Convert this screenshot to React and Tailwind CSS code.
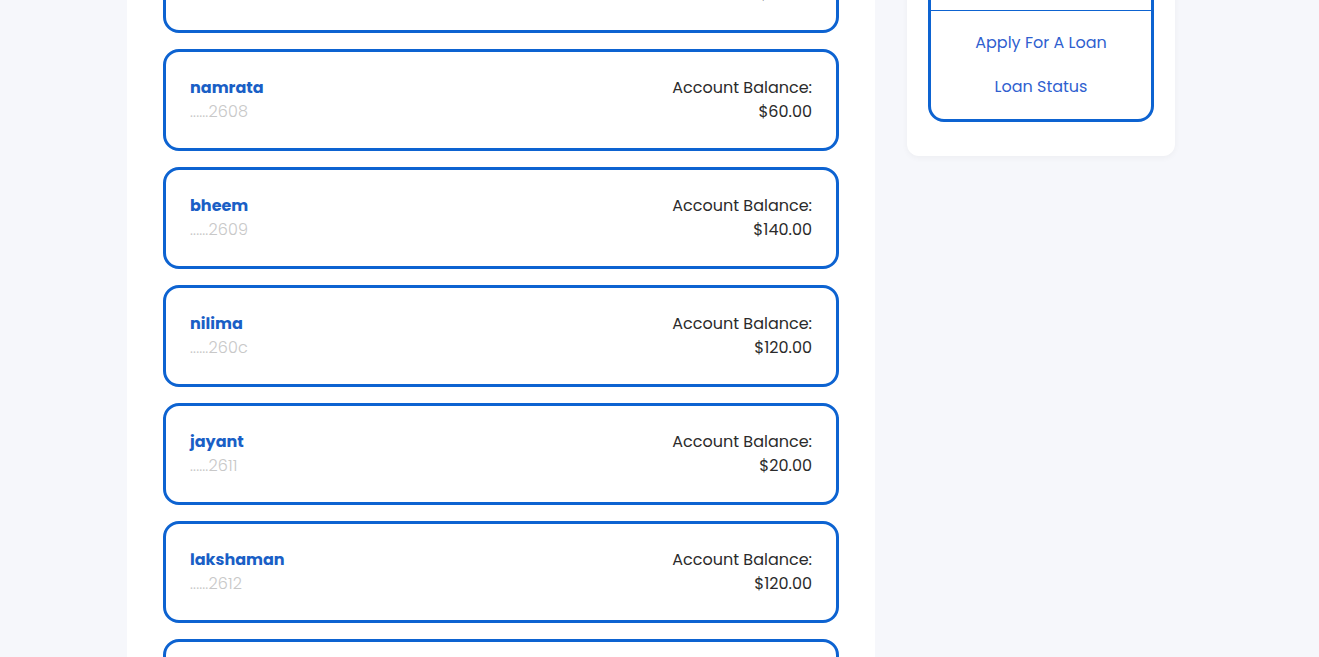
import { useLayoutEffect } from 'react';

const names = ['rahul', 'priya', 'amit', 'sneha', 'namrata', 'bheem', 'nilima', 'jayant', 'lakshaman', 'arjun', 'kavita', 'suresh', 'meena', 'rohit', 'pooja', 'vikram', 'anita', 'deepak'];
const balances = [250, 80, 300, 45, 60, 140, 120, 20, 120, 75, 210, 35, 90, 160, 55, 400, 15, 130];

const accounts = Array.from({ length: 43 }, (_, i) => ({
  name: names[i % names.length],
  id: i === 6 ? '260c' : String(2604 + i),
  balance: balances[i % balances.length],
}));

function AccountCard({ account }) {
  return (
    <div className="flex items-center justify-between rounded-2xl border-[3px] border-[#0d63d1] bg-white px-6 py-6">
      <div className="leading-6">
        <p className="text-base font-bold text-[#1a5fc6]">{account.name}</p>
        <p className="text-base font-light tracking-[0.01em] text-[#c8c8c8]">......{account.id}</p>
      </div>
      <div className="text-right text-base leading-6 text-[#2b2b2b]">
        <p>Account Balance:</p>
        <p>${account.balance.toFixed(2)}</p>
      </div>
    </div>
  );
}

export default function App() {
  useLayoutEffect(() => {
    window.scrollTo(0, 600);
  }, []);

  return (
    <div className="min-h-screen bg-[#f6f7fb] pb-8 pr-[17px] font-['Poppins','Inter',sans-serif]">
      <nav className="flex h-16 items-center justify-between bg-white px-10 shadow-sm">
        <span className="text-xl font-bold text-[#0d63d1]">NetBank</span>
        <span className="text-sm text-[#555]">Logout</span>
      </nav>

      <div className="mx-auto mt-8 flex w-[1048px] items-start gap-8">
        <section className="w-[748px] bg-white px-9 pb-9 pt-[33px]">
          <h2 className="mb-4 h-8 text-2xl font-semibold text-[#1a5fc6]">All Accounts</h2>
          <div className="flex flex-col gap-4">
            {accounts.map((account, i) => (
              <AccountCard key={i} account={account} />
            ))}
          </div>
        </section>

        <aside className="w-[268px] rounded-xl bg-white px-[21px] pb-[34px] pt-[21px] shadow-[0_2px_6px_rgba(0,0,0,0.04)]">
          <div className="rounded-2xl border-[3px] border-[#0d63d1]">
            <div className="flex h-[491px] flex-col items-center gap-5 border-b border-[#0d63d1] pt-8 text-base text-[#2f5fcf]">
              <div className="flex h-20 w-20 items-center justify-center rounded-full bg-[#e6eefb] text-2xl font-bold text-[#0d63d1]">A</div>
              <p className="font-semibold text-[#222]">Admin</p>
              <a href="#">Dashboard</a>
              <a href="#">Transfer Money</a>
              <a href="#">Deposit</a>
              <a href="#">Withdraw</a>
              <a href="#">Transactions</a>
            </div>
            <div className="flex flex-col items-center gap-5 pb-5 pt-5 text-base leading-6 text-[#2f5fcf]">
              <a href="#">Apply For A Loan</a>
              <a href="#">Loan Status</a>
            </div>
          </div>
        </aside>
      </div>
    </div>
  );
}
